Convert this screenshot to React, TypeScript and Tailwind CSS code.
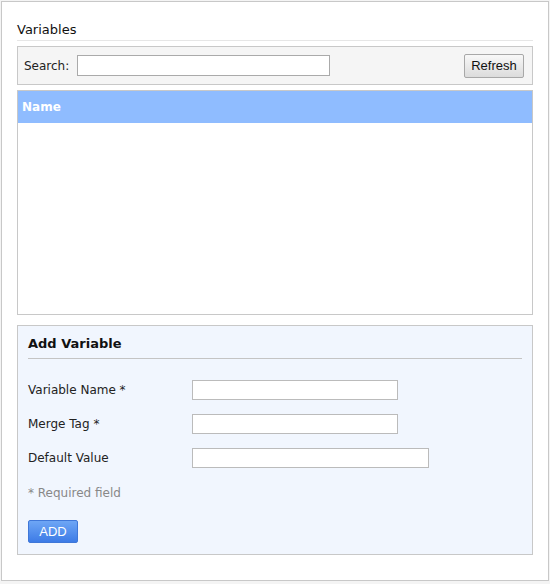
import { useState } from "react";

const font = { fontFamily: '"DejaVu Sans", Verdana, sans-serif' };

const Field = ({ label, width }: { label: string; width: string }) => {
  const [value, setValue] = useState("");
  return (
    <div className="flex h-[20px] items-center">
      <label className="w-[164px] text-[12px] text-[#222]">{label}</label>
      <input
        type="text"
        value={value}
        onChange={(e) => setValue(e.target.value)}
        className={`h-[20px] ${width} border border-[#bbbbbb] bg-white px-1 text-[12px] outline-none`}
      />
    </div>
  );
};

const App = () => {
  const [search, setSearch] = useState("");

  return (
    <div className="h-[584px] w-[550px] bg-[#f4f4f4] pl-[1px] pt-[1px]" style={font}>
      <div className="h-[580px] w-[548px] border border-[#c8c8c8] bg-white px-[15px] pt-[19px]">
        <h1 className="border-b border-[#e6e6e6] pb-[2px] text-[13px] leading-[17px] text-[#111]">
          Variables
        </h1>

        <div className="mt-[5px] flex h-[39px] items-center border border-[#c8c8c8] bg-[#f5f5f5] pl-[6px] pr-[8px]">
          <span className="text-[12px] text-[#222]">Search:</span>
          <input
            type="text"
            value={search}
            onChange={(e) => setSearch(e.target.value)}
            className="ml-[8px] h-[21px] w-[253px] border border-[#aaaaaa] bg-white px-1 text-[12px] outline-none"
          />
          <button
            className="ml-auto h-[24px] w-[60px] rounded-[2px] border border-[#a8a8a8] bg-gradient-to-b from-[#f8f8f8] to-[#dcdcdc] text-[13px] text-[#111]"
            style={{ fontFamily: '"Liberation Sans", Arial, sans-serif' }}
          >
            Refresh
          </button>
        </div>

        <div className="mt-[5px] h-[225px] border border-[#c8c8c8] bg-white">
          <table className="w-full">
            <thead>
              <tr className="h-[32px] bg-[#8fbcff]">
                <th className="px-[4px] text-left text-[12px] font-bold text-white">Name</th>
              </tr>
            </thead>
            <tbody></tbody>
          </table>
        </div>

        <div className="mt-[10px] h-[230px] border border-[#c8c8c8] bg-[#f1f6fe] px-[10px] pt-[9px]">
          <h2 className="border-b border-[#c4c4c4] pb-[6px] text-[13px] font-bold leading-[17px] text-[#111]">
            Add Variable
          </h2>
          <div className="mt-[21px] flex flex-col gap-[14px]">
            <Field label="Variable Name *" width="w-[206px]" />
            <Field label="Merge Tag *" width="w-[206px]" />
            <Field label="Default Value" width="w-[237px]" />
          </div>
          <p className="mt-[16px] text-[12px] text-[#888]">* Required field</p>
          <button
            className="mt-[18px] h-[23px] w-[50px] rounded-[2px] border border-[#3f77d8] bg-gradient-to-b from-[#6ea6f5] to-[#3d7be6] text-[13px] text-white"
            style={{ fontFamily: '"Liberation Sans", Arial, sans-serif' }}
          >
            ADD
          </button>
        </div>
      </div>
    </div>
  );
};

export default App;
